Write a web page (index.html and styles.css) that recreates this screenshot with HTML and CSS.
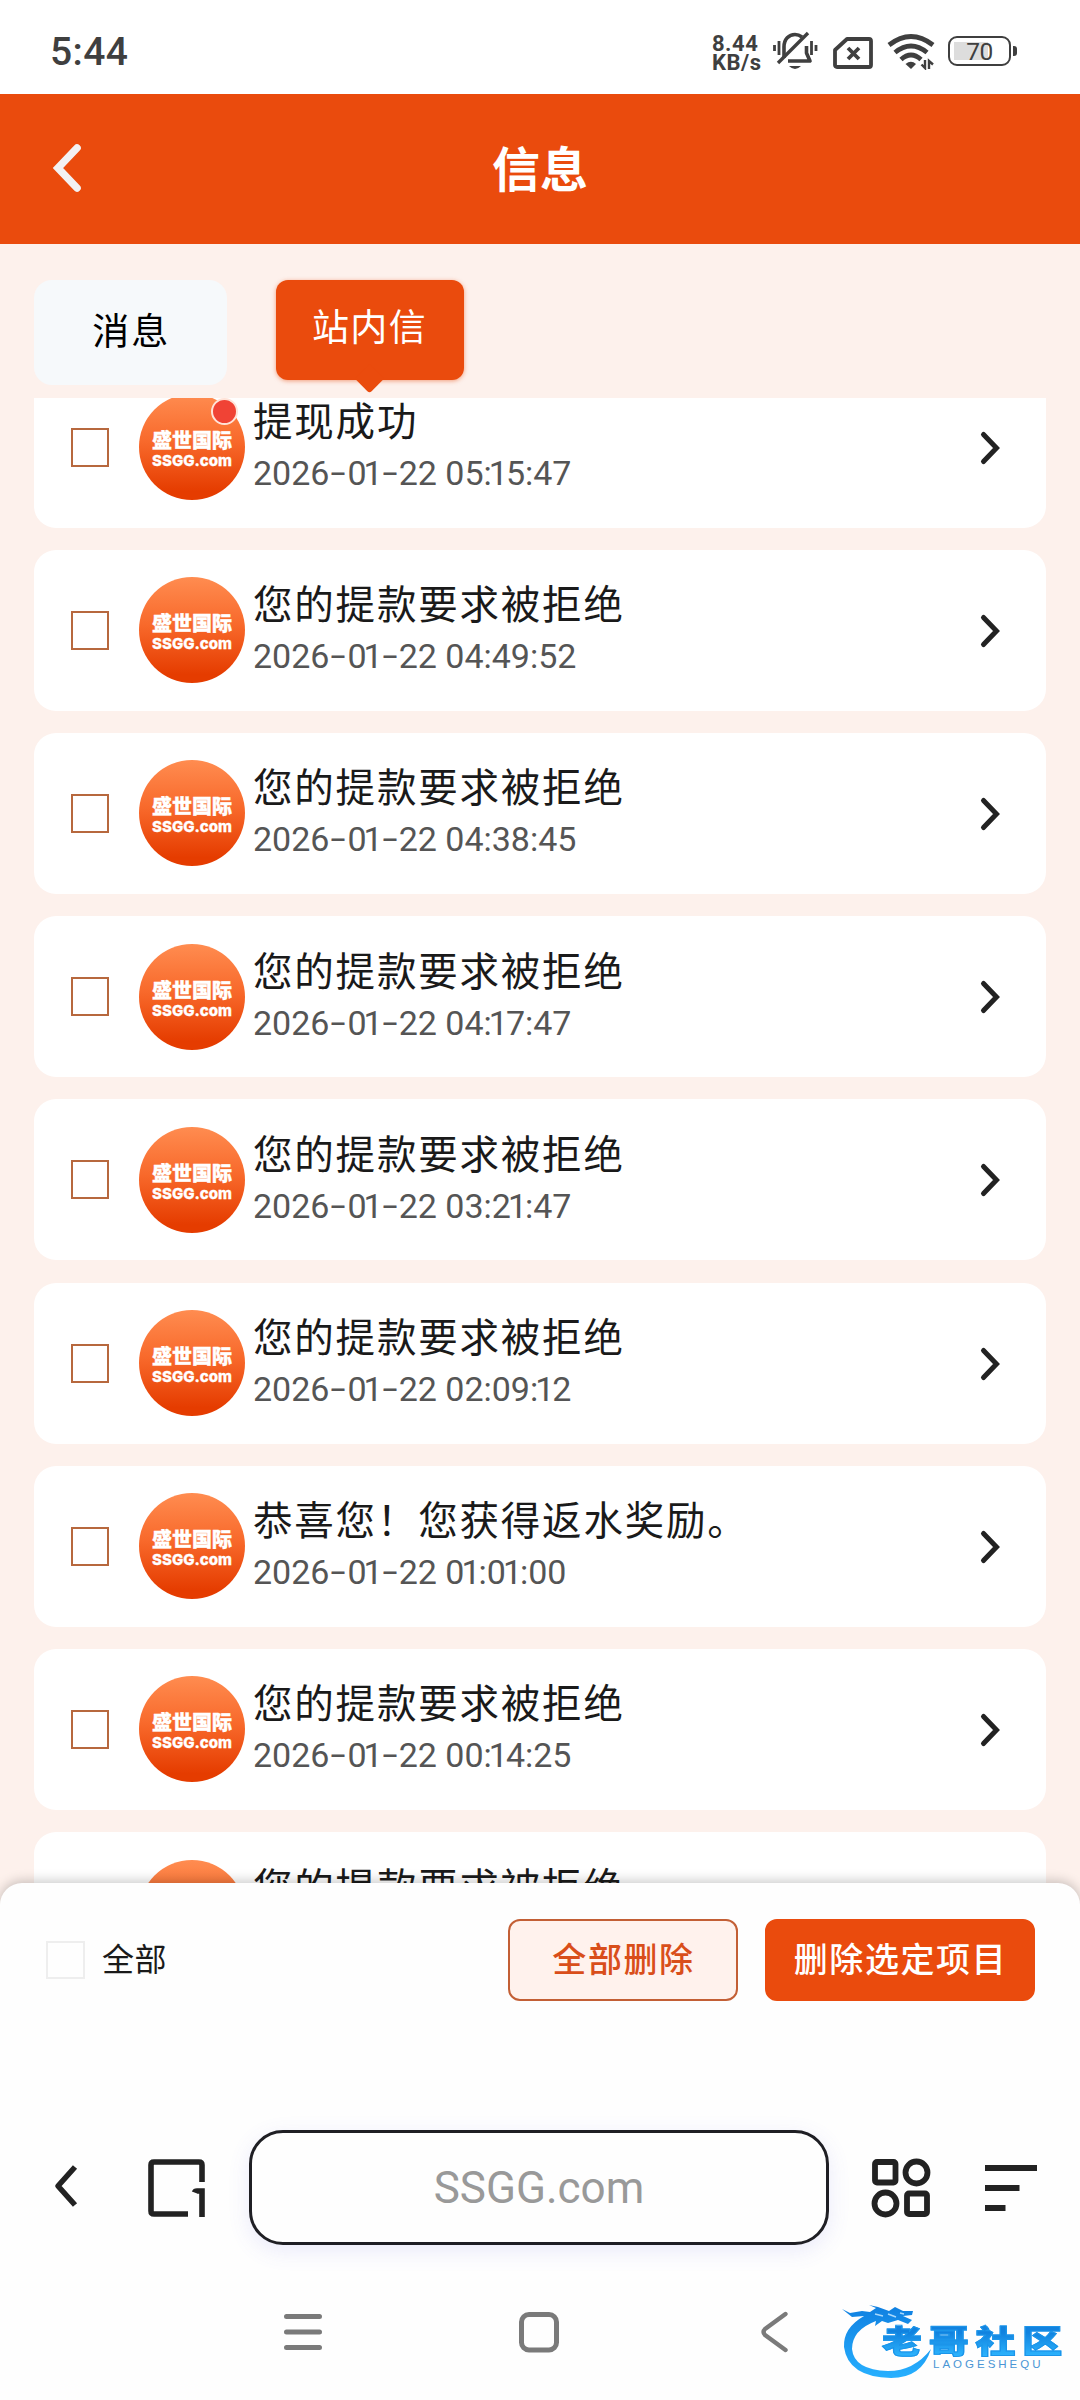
FILE: index.html
```
<!DOCTYPE html>
<html lang="zh-CN">
<head>
<meta charset="utf-8">
<title>信息</title>
<link rel="stylesheet" href="styles.css">
</head>
<body>
<div class="status">
  <span class="clock">5:44</span>
  <div class="status-icons">
    <div class="speed"><span>8.44</span><span>KB/s</span></div>
    <svg class="bell" width="46" height="40" viewBox="0 0 46 40" fill="none" stroke="#3f3f3f" stroke-width="3.600">
      <path d="M12 27V16C12 8 17 3.500 23 3.500C25.500 3.500 28 4.500 30 6"/>
      <path d="M34.500 15V22L38 30H16" stroke-linejoin="round"/>
      <path d="M6 32L36 2" stroke-width="3.400"/>
      <path d="M17 35H29Q23 41 17 35Z" fill="#3f3f3f" stroke="none"/>
      <path d="M2.500 14v6M7 10v14M39.500 10v14M44 14v6" stroke-width="2.800"/>
    </svg>
    <svg class="sim" width="42" height="34" viewBox="0 0 42 34" fill="none" stroke="#3f3f3f" stroke-width="3.800">
      <path d="M15 3H37Q39 3 39 5V29Q39 31 37 31H5Q3 31 3 29V14Z" stroke-linejoin="round"/>
      <path d="M16 12l11 11M27 12l-11 11"/>
    </svg>
    <svg class="wifi" width="48" height="36" viewBox="0 0 48 36" fill="none" stroke="#3f3f3f" stroke-width="4.800">
      <path d="M2 11Q24-6 46 11"/>
      <path d="M8 18.500Q24 5.500 40 18.500"/>
      <path d="M14 25.500Q24 16.500 34 25.500"/>
      <path d="M18.500 30Q24 25.500 29 30L24 35Z" fill="#3f3f3f" stroke="none"/>
      <path d="M38 26v8l-3.500-3.500M42 35v-8l4 3.500" stroke-width="2.400"/>
    </svg>
    <div class="battery"><span>70</span></div>
  </div>
</div>

<header class="header">
  <svg width="34" height="52" viewBox="0 0 34 52" fill="none" stroke="#f3f1f2" stroke-width="7.600" stroke-linecap="round"><path d="M28 6L9 26L28 46"/></svg>
  <h1>信息</h1>
</header>

<nav class="tabs">
  <div class="tab">消息</div>
  <div class="tab tab-active">站内信<i class="tab-tip"></i></div>
</nav>

<main class="viewport"><div class="list" id="list"></div></main>

<section class="sheet">
  <div class="actions">
    <span class="check check-muted"></span>
    <span class="all">全部</span>
    <button class="btn btn-outline">全部删除</button>
    <button class="btn btn-solid">删除选定项目</button>
  </div>
  <div class="browser">
    <svg class="b-back" width="28" height="46" viewBox="0 0 28 46" fill="none" stroke="#222" stroke-width="5.600" stroke-linejoin="round"><path d="M23 4L6 23L23 42"/></svg>
    <svg class="b-tab" width="60" height="60" viewBox="0 0 60 60" fill="none" stroke="#222" stroke-width="5.600"><path d="M55 24V7Q55 4 52 4H7Q4 4 4 7V53Q4 56 7 56H41" /><path d="M47.500 34.500Q48 33 50 33H55V59" /></svg>
    <div class="address">SSGG.com</div>
    <svg class="b-grid" width="60" height="60" viewBox="0 0 60 60" fill="none" stroke="#222" stroke-width="5.800"><rect x="4" y="4" width="20.500" height="20.500" rx="2"/><circle cx="45.500" cy="14.500" r="11"/><circle cx="14.500" cy="45.500" r="11"/><rect x="36" y="35.500" width="20" height="20.500" rx="2"/></svg>
    <svg class="b-menu" width="52" height="46" viewBox="0 0 52 46" fill="#222"><path d="M0 0h52v6H0zM0 20h34.500v6H0zM0 40h20.500v6H0z"/></svg>
  </div>
  <div class="sysnav">
    <svg width="40" height="44" viewBox="0 0 40 44" fill="none" stroke="#7a7a7a" stroke-width="5" stroke-linecap="round"><path d="M3.500 6.500h33M3.500 22h33M3.500 37.500h33"/></svg>
    <svg width="44" height="44" viewBox="0 0 44 44" fill="none" stroke="#7a7a7a" stroke-width="5"><rect x="4.500" y="4.500" width="35" height="35.500" rx="7.500"/></svg>
    <svg class="nav-back" width="32" height="44" viewBox="0 0 32 44" fill="none" stroke="#7a7a7a" stroke-width="4.400" stroke-linecap="round" stroke-linejoin="round"><path d="M26.500 4L6 19Q3 22 6 25L26.500 40"/></svg>
  </div>
</section>

<div class="mark">
  <svg width="100" height="84" viewBox="0 0 100 84">
    <defs><linearGradient id="blue" x1="0" y1="0" x2="0" y2="1"><stop offset="0" stop-color="#0f7fe0"/><stop offset="1" stop-color="#27b0ff"/></linearGradient></defs>
    <path fill="url(#blue)" d="M2 11L10 15L22 13L30 14L36 10L29 7L38 9L49 13L55 9L63 13L73 13L72 17L63 18L72 22L68 26L58 22L48 25L42 23L35 28L36 23Q12 32 12 51Q14 72 48 73Q74 73 91 51Q82 80 51 80Q8 79 4 49Q3 30 24 18L12 19Z"/>
    <path d="M35 16l8 2M48 16l8 3M60 15l4 1" stroke="#a8d8fb" stroke-width="1.500"/>
  </svg>
  <span class="mark-name">老哥社区</span>
  <span class="mark-latin">LAOGESHEQU</span>
</div>
<script src="app.js"></script>
</body>
</html>
```
FILE: app.js
```
const rejected = '您的提款要求被拒绝';
const messages = [
  ['提现成功', '2026-01-22 05:15:47', true],
  [rejected, '2026-01-22 04:49:52'],
  [rejected, '2026-01-22 04:38:45'],
  [rejected, '2026-01-22 04:17:47'],
  [rejected, '2026-01-22 03:21:47'],
  [rejected, '2026-01-22 02:09:12'],
  ['恭喜您！您获得返水奖励。', '2026-01-22 01:01:00'],
  [rejected, '2026-01-22 00:14:25'],
  [rejected, '']
];

// Hyphens are widened and ones tightened to give proportional date figures.
const figures = (date) => date
  .replace(/-/g, '<b class="dash">-</b>')
  .replace(/1/g, '<b class="one">1</b>');

// The last card is only partly scrolled into view, so its avatar shows no wordmark.
const wordmark = '<span class="brand">盛世国际</span><span class="site">SSGG.com</span>';

document.getElementById('list').innerHTML = messages.map(([title, date, unread]) => `
  <article class="card">
    <span class="check"></span>
    <div class="avatar">${date ? wordmark : ''}${unread ? '<i class="dot"></i>' : ''}</div>
    <div class="text"><div class="title">${title}</div><div class="date">${figures(date)}</div></div>
    <svg class="go" width="24" height="36" viewBox="0 0 24 36" fill="none" stroke="#222" stroke-width="5" stroke-linecap="round"><path d="M4.500 4.500L17.500 18L4.500 31.500"/></svg>
  </article>`).join('');
```
FILE: styles.css
```
* { box-sizing: border-box; }
body {
  margin: 0;
  width: 1080px;
  height: 2400px;
  overflow: hidden;
  position: relative;
  display: flex;
  flex-direction: column;
  background: #fdf1ec;
  font-family: Roboto, "Noto Sans CJK SC", sans-serif;
  color: #1a1a1a;
}
svg { display: block; flex: none; }

.status {
  flex: none;
  height: 94px;
  background: #fff;
  display: flex;
  justify-content: space-between;
  padding: 0 69px 0 50px;
  color: #3f3f3f;
}
.clock { font-size: 39px; font-weight: 500; line-height: 46px; margin-top: 29px; letter-spacing: .4px; }
.status-icons { display: flex; align-items: flex-start; }
.speed { display: flex; flex-direction: column; font-size: 22px; font-weight: 700; line-height: 19px; margin: 34px 11px 0 0; letter-spacing: .5px; width: 49px; }
.bell { margin-top: 31px; }
.sim { margin: 35.500px 13px 0 14px; }
.wifi { margin: 34px 13px 0 0; }
.battery {
  position: relative;
  width: 63px; height: 30px; margin-top: 36px;
  border: 2.600px solid #3f3f3f; border-radius: 9px;
  background: linear-gradient(#ddd, #ddd) 4px 3.500px / 34px 18px no-repeat;
  font-size: 24.500px; line-height: 27px; text-align: center; letter-spacing: -.4px;
}
.battery::after { content: ""; position: absolute; right: -8px; top: 8px; width: 4px; height: 10px; border-radius: 0 3px 3px 0; background: #3f3f3f; }

.header {
  flex: none;
  height: 150px;
  background: #ea4b0d;
  display: grid;
  grid-template-columns: 140px 1fr 140px;
  align-items: center;
}
.header svg { margin-left: 48.500px; margin-top: -2px; }
.header h1 { margin: 4px 0 0; text-align: center; font-size: 48px; line-height: 70px; font-weight: 700; color: #fff; }

.tabs { flex: none; height: 154px; display: flex; gap: 49px; padding: 36px 34px 0; align-items: flex-start; }
.tab { width: 192.500px; height: 105px; border-radius: 18px; background: #f6f9fb; color: #000; font-size: 37px; line-height: 105px; letter-spacing: 2px; text-align: center; padding-left: 2px; }
.tab-active { position: relative; width: 188px; height: 100px; border-radius: 12px; background: #ea4b0d; color: #fff; line-height: 98px; box-shadow: 0 1px 4px rgba(234, 75, 13, .5); letter-spacing: 1.400px; padding-left: 0; }
.tab-tip { position: absolute; left: 50%; top: 88px; width: 21px; height: 21px; margin-left: -10.500px; border-radius: 3px; background: #ea4b0d; transform: rotate(45deg); }

.viewport { flex: none; height: 1485px; overflow: hidden; padding: 0 34px; }
.list { display: flex; flex-direction: column; gap: 22.200px; margin-top: -31.400px; }
.card { flex: none; height: 161px; border-radius: 22px; background: #fff; display: flex; align-items: center; padding: 0 46px 0 37px; }
.check { flex: none; width: 38px; height: 39px; border: 2px solid #b7683e; }
.avatar {
  position: relative; flex: none;
  width: 106px; height: 106px; margin-left: 30px; border-radius: 50%;
  background: linear-gradient(#ff8c50, #f8692b 45%, #e53c00 92%);
  display: flex; flex-direction: column; align-items: center;
  color: #fff; white-space: nowrap;
}
.brand { font-size: 20px; font-weight: 900; line-height: 22px; margin-top: 36px; -webkit-text-stroke: .3px #fff; }
.site { font-family: Inter, sans-serif; font-size: 15px; font-weight: 800; line-height: 17px; -webkit-text-stroke: .3px #fff; }
.dot { position: absolute; left: 72px; top: 4px; width: 27px; height: 27px; border-radius: 50%; background: #f04335; border: 2px solid #ffe3d8; }
.text { flex: 1; margin-left: 8px; margin-top: 4px; white-space: nowrap; }
.title { font-size: 39.500px; line-height: 52px; letter-spacing: 1.800px; }
.date { height: 52px; font-size: 34px; line-height: 49px; color: #555; }
.date b { font-weight: 400; display: inline-block; }
.date .dash { width: 18px; text-align: center; transform: translateY(-1px) scaleX(1.6); }
.date .one { margin: 0 -2px 0 -3px; }
.go { margin-right: -3px; margin-top: 1px; }

.sheet {
  position: relative;
  flex: none;
  display: flex;
  flex-direction: column;
  height: 517px;
  background: #fefefe;
  border-radius: 22px 22px 0 0;
  box-shadow: 0 -2px 12px rgba(0, 0, 0, .22);
}
.actions { display: flex; align-items: center; height: 82px; margin: 36px 45px 0 46px; }
.check-muted { border-color: #eee; height: 38px; width: 39px; }
.all { font-size: 32px; letter-spacing: .4px; line-height: 46px; margin: -1px auto 0 17px; }
.btn { height: 82px; border-radius: 12px; border: 2px solid #ea4b0d; font: 500 34px/76px Roboto, "Noto Sans CJK SC", sans-serif; letter-spacing: 1.600px; padding: 0 0 1px 1px; }
.btn-outline { width: 230px; background: #fff2ed; color: #d94e1a; border-color: #c35f35; margin-right: 27px; }
.btn-solid { width: 270px; background: #ea4b0d; color: #fff; }
.browser { display: flex; align-items: center; height: 115px; margin: 129px 42px 0 52px; }
.b-back { margin-top: -4px; }
.b-tab { margin-left: 67px; }
.address { width: 580px; height: 115px; margin-left: 42px; border: 3px solid #1f1f24; border-radius: 34px; box-shadow: 0 6px 22px rgba(90, 90, 220, .12); background: #fefefe; color: #999; text-align: center; font-size: 44px; line-height: 110px; }
.b-grid { margin-left: 42px; }
.b-menu { margin-left: 54px; }
.sysnav { display: flex; align-items: center; height: 44px; margin: 65px 0 0 283px; gap: 194px; }
.nav-back { margin-left: 4px; }

.mark { position: absolute; left: 840px; top: 2298px; width: 230px; height: 90px; color: #168fe8; white-space: nowrap; }
.mark-name { position: absolute; left: 42px; top: 28px; font-size: 32px; line-height: 32px; font-weight: 900; letter-spacing: 5.400px; transform: scaleX(1.25); transform-origin: 0 0; background: linear-gradient(#1182df 20%, #2bb1fb 90%); -webkit-background-clip: text; color: transparent; -webkit-text-stroke: 1px #1b95ea; }
.mark-latin { position: absolute; left: 93px; top: 60px; font-family: "Liberation Sans", Arial, sans-serif; font-size: 11.500px; line-height: 12px; letter-spacing: 3px; color: #4a96d5; }
```
